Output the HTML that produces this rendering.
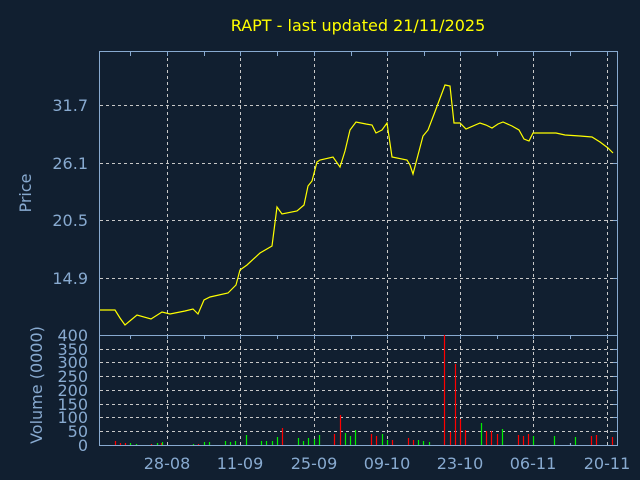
<!DOCTYPE html>
<html><head><meta charset="utf-8"><style>
html,body{margin:0;padding:0;background:#111f30;}
svg{display:block;font-family:"DejaVu Sans","Liberation Sans",sans-serif;}
</style></head><body>
<svg width="640" height="480" viewBox="0 0 640 480" xmlns="http://www.w3.org/2000/svg">
<rect width="640" height="480" fill="#111f30"/>
<text x="358" y="31" fill="#ffff00" font-size="16" text-anchor="middle">RAPT - last updated 21/11/2025</text>
<g stroke="#c8c8c8" stroke-width="1" stroke-dasharray="3,3" fill="none">
<path d="M167.5 52V445M240.5 52V445M314.5 52V445M387.5 52V445M460.5 52V445M533.5 52V445M607.5 52V445"/>
<path d="M100 105.5H617M100 163.5H617M100 220.5H617M100 278.5H617"/>
<path d="M100 349.5H617M100 362.5H617M100 376.5H617M100 390.5H617M100 404.5H617M100 417.5H617M100 431.5H617"/>
</g>
<g stroke="#88aad0" stroke-width="1" fill="none">
<rect x="99.5" y="51.5" width="518" height="394"/>
<path d="M99.5 335.5H617.5"/>
<path d="M130.5 52v4M167.5 52v4M204.5 52v4M240.5 52v4M277.5 52v4M314.5 52v4M351.5 52v4M387.5 52v4M424.5 52v4M460.5 52v4M497.5 52v4M533.5 52v4M570.5 52v4M607.5 52v4"/>
<path d="M130.5 335v4M167.5 335v4M204.5 335v4M240.5 335v4M277.5 335v4M314.5 335v4M351.5 335v4M387.5 335v4M424.5 335v4M460.5 335v4M497.5 335v4M533.5 335v4M570.5 335v4M607.5 335v4"/>
<path d="M613 105.5h4M613 163.5h4M613 220.5h4M613 278.5h4M613 349.5h4M613 362.5h4M613 376.5h4M613 390.5h4M613 404.5h4M613 417.5h4M613 431.5h4"/>
</g>
<g fill="#88aad0" font-size="16" text-anchor="end">
<text x="88" y="111">31.7</text><text x="88" y="169">26.1</text><text x="88" y="226">20.5</text><text x="88" y="284">14.9</text>
<text x="88" y="341">400</text><text x="88" y="355">350</text><text x="88" y="368">300</text><text x="88" y="382">250</text><text x="88" y="396">200</text><text x="88" y="410">150</text><text x="88" y="423">100</text><text x="88" y="437">50</text><text x="88" y="451">0</text>
</g>
<g fill="#88aad0" font-size="16" text-anchor="middle">
<text x="167" y="469">28-08</text><text x="240" y="469">11-09</text><text x="314" y="469">25-09</text><text x="387" y="469">09-10</text><text x="460" y="469">23-10</text><text x="533" y="469">06-11</text><text x="607" y="469">20-11</text>
<text transform="translate(31,193) rotate(-90)">Price</text>
<text transform="translate(42,385) rotate(-90)">Volume (0000)</text>
</g>
<polyline fill="none" stroke="#ffff00" stroke-width="1.2" points="100,310 115,310 120,318 125,325 137,315 151,319 162,312 170,314 185,311 193,309 198,314 204,300 210,297 228,293 236,285 240,270 247,265 260,253 272,246 277,207 282,214 297,211 304,205 308,186 312,181 317,162 320,160 333,157 340,167 345,151 350,130 356,122 366,124 372,125 376,133 382,130 387,123 392,157 407,160 410,165 413,174 423,136 428,130 436,109 445,85 450,86 454,123 460,123 466,129 480,123 486,125 492,128 498,124 503,122 512,126 519,130 524,139 529,141 533,133 556,133 565,135 580,136 592,137 600,142 608,148 613,153"/>
<g stroke-width="1.2">
<path stroke="#ff0000" d="M115.5 445v-4M120.5 445v-2M125.5 445v-2M151.5 445v-1M161.5 445v-2M198.5 445v-1M282.5 445v-17M334.5 445v-11M340.5 445v-30M371.5 445v-11M376.5 445v-9M392.5 445v-5M408.5 445v-7M413.5 445v-5M444.5 445v-110M450.5 445v-13M455.5 445v-81M460.5 445v-26M465.5 445v-15M486.5 445v-14M491.5 445v-14M497.5 445v-11M518.5 445v-10M523.5 445v-9M528.5 445v-11M591.5 445v-9M596.5 445v-10M612.5 445v-8"/>
<path stroke="#00ee00" d="M130.5 445v-2M136.5 445v-1M157.5 445v-2M162.5 445v-3M193.5 445v-1M204.5 445v-3M209.5 445v-3M225.5 445v-4M230.5 445v-3M235.5 445v-4M246.5 445v-10M261.5 445v-4M266.5 445v-4M272.5 445v-4M277.5 445v-8M298.5 445v-7M303.5 445v-4M308.5 445v-7M314.5 445v-6M319.5 445v-10M345.5 445v-12M350.5 445v-9M355.5 445v-15M382.5 445v-11M387.5 445v-5M418.5 445v-5M423.5 445v-4M429.5 445v-3M481.5 445v-22M502.5 445v-16M533.5 445v-9M554.5 445v-9M575.5 445v-8"/>
<path stroke="#88aad0" d="M570.5 445v-2"/>
</g>
</svg>
</body></html>
